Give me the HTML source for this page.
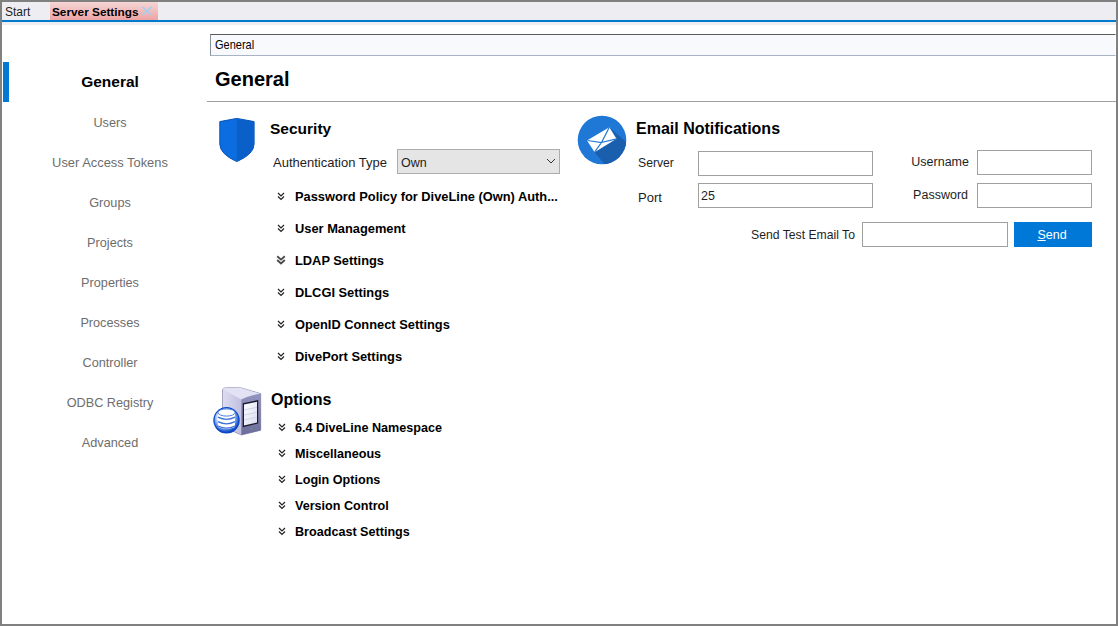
<!DOCTYPE html>
<html><head><meta charset="utf-8"><style>
html,body{margin:0;padding:0;width:1118px;height:626px;overflow:hidden;background:#fff;}
body{position:relative;font-family:"Liberation Sans",sans-serif;}
.t{position:absolute;white-space:nowrap;}
.b{position:absolute;}
</style></head><body>
<div class="b" style="left:0px;top:0px;width:1118px;height:626px;background:#fff;"></div>
<div class="b" style="left:2px;top:2px;width:1114px;height:18px;background:#eeeef2;"></div>
<div class="b" style="left:50px;top:2px;width:108px;height:18px;background:linear-gradient(#f6d6d6,#eea3a3);"></div>
<div class="b" style="left:2px;top:20px;width:1114px;height:2px;background:#007acc;"></div>
<div class="b" style="left:2px;top:22px;width:1114px;height:3px;background:#eeeef2;"></div>
<div class="t" style="left:5px;top:-8.00px;font-size:12px;line-height:40px;font-weight:normal;color:#1e1e1e;">Start</div>
<div class="t" style="left:52px;top:-8.00px;font-size:11.8px;line-height:40px;font-weight:bold;color:#000;">Server Settings</div>
<svg class="b" style="left:141px;top:6px" width="12" height="10" viewBox="0 0 12 10"><path d="M1.5 1 L10.5 9 M10.5 1 L1.5 9" stroke="#9ad2f4" stroke-width="1.6" fill="none"/></svg>
<div class="b" style="left:0px;top:0px;width:1118px;height:2px;background:#808080;"></div>
<div class="b" style="left:0px;top:624px;width:1118px;height:2px;background:#808080;"></div>
<div class="b" style="left:0px;top:0px;width:2px;height:626px;background:#808080;"></div>
<div class="b" style="left:1116px;top:0px;width:2px;height:626px;background:#808080;"></div>
<div class="b" style="left:3px;top:62px;width:6px;height:40px;background:#0078d4;"></div>
<div class="t" style="left:-90px;width:400px;text-align:center;top:61.50px;font-size:15.5px;line-height:40px;font-weight:bold;color:#000;">General</div>
<div class="t" style="left:-90px;width:400px;text-align:center;top:103.00px;font-size:12.7px;line-height:40px;font-weight:normal;color:#6d6d6d;">Users</div>
<div class="t" style="left:-90px;width:400px;text-align:center;top:142.50px;font-size:12.9px;line-height:40px;font-weight:normal;color:#6d6d6d;">User Access Tokens</div>
<div class="t" style="left:-90px;width:400px;text-align:center;top:183.00px;font-size:12.7px;line-height:40px;font-weight:normal;color:#6d6d6d;">Groups</div>
<div class="t" style="left:-90px;width:400px;text-align:center;top:223.00px;font-size:12.7px;line-height:40px;font-weight:normal;color:#6d6d6d;">Projects</div>
<div class="t" style="left:-90px;width:400px;text-align:center;top:263.00px;font-size:12.7px;line-height:40px;font-weight:normal;color:#6d6d6d;">Properties</div>
<div class="t" style="left:-90px;width:400px;text-align:center;top:303.00px;font-size:12.7px;line-height:40px;font-weight:normal;color:#6d6d6d;">Processes</div>
<div class="t" style="left:-90px;width:400px;text-align:center;top:343.00px;font-size:12.7px;line-height:40px;font-weight:normal;color:#6d6d6d;">Controller</div>
<div class="t" style="left:-90px;width:400px;text-align:center;top:383.00px;font-size:12.7px;line-height:40px;font-weight:normal;color:#6d6d6d;">ODBC Registry</div>
<div class="t" style="left:-90px;width:400px;text-align:center;top:423.00px;font-size:12.7px;line-height:40px;font-weight:normal;color:#6d6d6d;">Advanced</div>
<div class="b" style="left:210px;top:34px;width:906px;height:22px;background:#f8f9fc;border-top:1px solid #5a5a5a;border-left:1px solid #8a909a;border-bottom:1px solid #a8b4c4;border-right:1px solid #fff;box-sizing:border-box;"></div>
<div class="t" style="left:215px;top:25.00px;font-size:11px;line-height:40px;font-weight:normal;color:#000;transform:scaleY(1.08);transform-origin:0 29px;">General</div>
<div class="t" style="left:215px;top:59.00px;font-size:20px;line-height:40px;font-weight:bold;color:#000;">General</div>
<div class="b" style="left:207px;top:101px;width:909px;height:1px;background:#a0a0a0;"></div>
<div class="t" style="left:270px;top:108.50px;font-size:15.5px;line-height:40px;font-weight:bold;color:#000;">Security</div>
<div class="t" style="left:273px;top:142.50px;font-size:13px;line-height:40px;font-weight:normal;color:#1e1e1e;">Authentication Type</div>
<div class="b" style="left:397px;top:149px;width:163px;height:25px;background:#e5e5e5;border:1px solid #adadad;box-sizing:border-box;"></div>
<div class="t" style="left:401px;top:143.00px;font-size:12.5px;line-height:40px;font-weight:normal;color:#1e1e1e;">Own</div>
<svg class="b" style="left:546px;top:158px" width="10" height="7" viewBox="0 0 10 7"><path d="M1 1 L5 5 L9 1" stroke="#333" stroke-width="1" fill="none"/></svg>
<svg class="b" style="left:277px;top:192px" width="8" height="9" viewBox="0 0 8 9"><path d="M1 1 L4 4 L7 1 M1 4.5 L4 7.5 L7 4.5" stroke="#222" stroke-width="1.2" fill="none"/></svg>
<div class="t" style="left:295px;top:176.50px;font-size:12.85px;line-height:40px;font-weight:bold;color:#000;">Password Policy for DiveLine (Own) Auth...</div>
<svg class="b" style="left:277px;top:224px" width="8" height="9" viewBox="0 0 8 9"><path d="M1 1 L4 4 L7 1 M1 4.5 L4 7.5 L7 4.5" stroke="#222" stroke-width="1.2" fill="none"/></svg>
<div class="t" style="left:295px;top:208.50px;font-size:12.85px;line-height:40px;font-weight:bold;color:#000;">User Management</div>
<svg class="b" style="left:276px;top:255px" width="10" height="10" viewBox="0 0 10 10"><path d="M1.2 1.2 L5 4.6 L8.8 1.2 M1.2 5 L5 8.4 L8.8 5" stroke="#4a4a4a" stroke-width="1.9" fill="none"/></svg>
<div class="t" style="left:295px;top:240.50px;font-size:12.85px;line-height:40px;font-weight:bold;color:#000;">LDAP Settings</div>
<svg class="b" style="left:277px;top:288px" width="8" height="9" viewBox="0 0 8 9"><path d="M1 1 L4 4 L7 1 M1 4.5 L4 7.5 L7 4.5" stroke="#222" stroke-width="1.2" fill="none"/></svg>
<div class="t" style="left:295px;top:272.50px;font-size:12.85px;line-height:40px;font-weight:bold;color:#000;">DLCGI Settings</div>
<svg class="b" style="left:277px;top:320px" width="8" height="9" viewBox="0 0 8 9"><path d="M1 1 L4 4 L7 1 M1 4.5 L4 7.5 L7 4.5" stroke="#222" stroke-width="1.2" fill="none"/></svg>
<div class="t" style="left:295px;top:304.50px;font-size:12.85px;line-height:40px;font-weight:bold;color:#000;">OpenID Connect Settings</div>
<svg class="b" style="left:277px;top:352px" width="8" height="9" viewBox="0 0 8 9"><path d="M1 1 L4 4 L7 1 M1 4.5 L4 7.5 L7 4.5" stroke="#222" stroke-width="1.2" fill="none"/></svg>
<div class="t" style="left:295px;top:336.50px;font-size:12.85px;line-height:40px;font-weight:bold;color:#000;">DivePort Settings</div>
<div class="t" style="left:271px;top:379.50px;font-size:16px;line-height:40px;font-weight:bold;color:#000;">Options</div>
<svg class="b" style="left:278px;top:423px" width="8" height="9" viewBox="0 0 8 9"><path d="M1 1 L4 4 L7 1 M1 4.5 L4 7.5 L7 4.5" stroke="#222" stroke-width="1.2" fill="none"/></svg>
<div class="t" style="left:295px;top:408.00px;font-size:12.6px;line-height:40px;font-weight:bold;color:#000;">6.4 DiveLine Namespace</div>
<svg class="b" style="left:278px;top:449px" width="8" height="9" viewBox="0 0 8 9"><path d="M1 1 L4 4 L7 1 M1 4.5 L4 7.5 L7 4.5" stroke="#222" stroke-width="1.2" fill="none"/></svg>
<div class="t" style="left:295px;top:434.00px;font-size:12.6px;line-height:40px;font-weight:bold;color:#000;">Miscellaneous</div>
<svg class="b" style="left:278px;top:475px" width="8" height="9" viewBox="0 0 8 9"><path d="M1 1 L4 4 L7 1 M1 4.5 L4 7.5 L7 4.5" stroke="#222" stroke-width="1.2" fill="none"/></svg>
<div class="t" style="left:295px;top:460.00px;font-size:12.6px;line-height:40px;font-weight:bold;color:#000;">Login Options</div>
<svg class="b" style="left:278px;top:501px" width="8" height="9" viewBox="0 0 8 9"><path d="M1 1 L4 4 L7 1 M1 4.5 L4 7.5 L7 4.5" stroke="#222" stroke-width="1.2" fill="none"/></svg>
<div class="t" style="left:295px;top:486.00px;font-size:12.6px;line-height:40px;font-weight:bold;color:#000;">Version Control</div>
<svg class="b" style="left:278px;top:527px" width="8" height="9" viewBox="0 0 8 9"><path d="M1 1 L4 4 L7 1 M1 4.5 L4 7.5 L7 4.5" stroke="#222" stroke-width="1.2" fill="none"/></svg>
<div class="t" style="left:295px;top:512.00px;font-size:12.6px;line-height:40px;font-weight:bold;color:#000;">Broadcast Settings</div>
<div class="t" style="left:636px;top:108.50px;font-size:16px;line-height:40px;font-weight:bold;color:#000;">Email Notifications</div>
<div class="t" style="left:638px;top:143.00px;font-size:12.2px;line-height:40px;font-weight:normal;color:#1e1e1e;">Server</div>
<div class="t" style="left:638px;top:177.50px;font-size:13px;line-height:40px;font-weight:normal;color:#1e1e1e;">Port</div>
<div class="b" style="left:698px;top:151px;width:175px;height:25px;background:#fff;border:1px solid #a0a0a0;box-sizing:border-box;"></div>
<div class="b" style="left:698px;top:183px;width:175px;height:25px;background:#fff;border:1px solid #a0a0a0;box-sizing:border-box;"></div>
<div class="t" style="left:701px;top:176.00px;font-size:12.5px;line-height:40px;font-weight:normal;color:#1e1e1e;">25</div>
<div class="t" style="left:569px;width:400px;text-align:right;top:142.00px;font-size:12.5px;line-height:40px;font-weight:normal;color:#1e1e1e;">Username</div>
<div class="t" style="left:568px;width:400px;text-align:right;top:175.00px;font-size:12.5px;line-height:40px;font-weight:normal;color:#1e1e1e;">Password</div>
<div class="b" style="left:977px;top:150px;width:115px;height:25px;background:#fff;border:1px solid #a0a0a0;box-sizing:border-box;"></div>
<div class="b" style="left:977px;top:183px;width:115px;height:25px;background:#fff;border:1px solid #a0a0a0;box-sizing:border-box;"></div>
<div class="t" style="left:455px;width:400px;text-align:right;top:215.00px;font-size:12.2px;line-height:40px;font-weight:normal;color:#1e1e1e;">Send Test Email To</div>
<div class="b" style="left:862px;top:222px;width:146px;height:25px;background:#fff;border:1px solid #a0a0a0;box-sizing:border-box;"></div>
<div class="b" style="left:1014px;top:222px;width:78px;height:25px;background:#0078d7;"></div>
<div class="t" style="left:852px;width:400px;text-align:center;top:215.00px;font-size:12.5px;line-height:40px;font-weight:normal;color:#fff;"><u>S</u>end</div>
<svg class="b" style="left:218px;top:117px" width="38" height="46" viewBox="0 0 38 46">
<path d="M1.8 4.6 L18.8 1.4 L36.1 4.6 L36.1 27 Q36.1 37 18.8 44.6 Q1.8 37 1.8 27 Z" fill="#0b6de0" stroke="#0654b8" stroke-width="1"/>
<path d="M18.8 1.9 L35.6 5 L35.6 27 Q35.6 36.6 18.8 44 Z" fill="#0a5fc8"/>
</svg>
<svg class="b" style="left:577px;top:115px" width="50" height="50" viewBox="0 0 50 50">
<defs><clipPath id="cc"><circle cx="25" cy="25" r="24.3"/></clipPath></defs>
<circle cx="25" cy="25" r="24.3" fill="#1f78d6"/>
<g clip-path="url(#cc)"><path d="M32.3 12.2 L64 40 L40 64 L17.6 37.2 Z" fill="#1a5fae"/></g>
<path d="M10 25.5 L32.3 12.2 L39.5 23.8 L17.6 37.2 Z" fill="#fff"/>
<path d="M10.5 25.5 L24.5 27.5 L32.3 12.2 M17.6 37.2 L24.5 27.5 L39.5 23.8" stroke="#1f78d6" stroke-width="1.2" fill="none"/>
</svg>
<svg class="b" style="left:212px;top:385px" width="52" height="52" viewBox="0 0 52 52">
<defs>
<linearGradient id="sg" x1="0" y1="0" x2="1" y2="0"><stop offset="0" stop-color="#dcdcf2"/><stop offset="1" stop-color="#a4a4cc"/></linearGradient>
<linearGradient id="fg" x1="0" y1="0" x2="0" y2="1"><stop offset="0" stop-color="#9494c0"/><stop offset="1" stop-color="#6c6c9c"/></linearGradient>
<linearGradient id="scr" x1="0" y1="0" x2="1" y2="1"><stop offset="0" stop-color="#ffffff"/><stop offset="1" stop-color="#d8dcf0"/></linearGradient>
<radialGradient id="dg" cx="0.45" cy="0.4" r="0.6"><stop offset="0.5" stop-color="#ffffff"/><stop offset="0.75" stop-color="#6a9aee"/><stop offset="1" stop-color="#0a40c0"/></radialGradient>
</defs>
<path d="M10.5 4.5 Q11 2.8 14 2.8 L27.5 2.4 L48.7 8.6 L48.7 45.3 L29.3 50 L10.5 41.5 Z" fill="url(#sg)" stroke="#5a5a80" stroke-width="0.5"/>
<path d="M10.8 4.5 Q11 3 14 3 L27.5 2.6 L48.5 8.7 Q38 10.5 29.3 14.5 Z" fill="#e2e2f4"/>
<path d="M29.3 14.5 Q38 10.5 48.7 8.6 L48.7 45.3 L29.3 50 Z" fill="url(#fg)"/>
<path d="M30.8 18.2 L46.2 15 L46.2 38.6 L30.8 42.2 Z" fill="#1c1c2c"/>
<path d="M32 19.5 L45 16.8 L45 37.6 L32 40.6 Z" fill="url(#scr)"/>
<path d="M32 25 L45 22.3 M32 30 L45 27.3 M32 35 L45 32.3" stroke="#c4c8e0" stroke-width="0.7"/>
<circle cx="39.6" cy="43.6" r="0.9" fill="#30c030"/>
<circle cx="14.5" cy="35.3" r="13.2" fill="#0a48c8"/>
<circle cx="14.5" cy="35.3" r="12" fill="url(#dg)"/>
<path d="M6 27.5 L6 42 Q14.5 46 23 42 L23 27.5 Z" fill="#fff"/>
<path d="M6 32.2 Q14.5 36.5 23 32.2 M6 36.6 Q14.5 41 23 36.6 M6 41 Q14.5 45.3 23 41" stroke="#3a72d8" stroke-width="1.3" fill="none"/>
<ellipse cx="14.5" cy="27.5" rx="8.5" ry="3.6" fill="#fff" stroke="#4a80e0" stroke-width="1"/>
</svg>
</body></html>
